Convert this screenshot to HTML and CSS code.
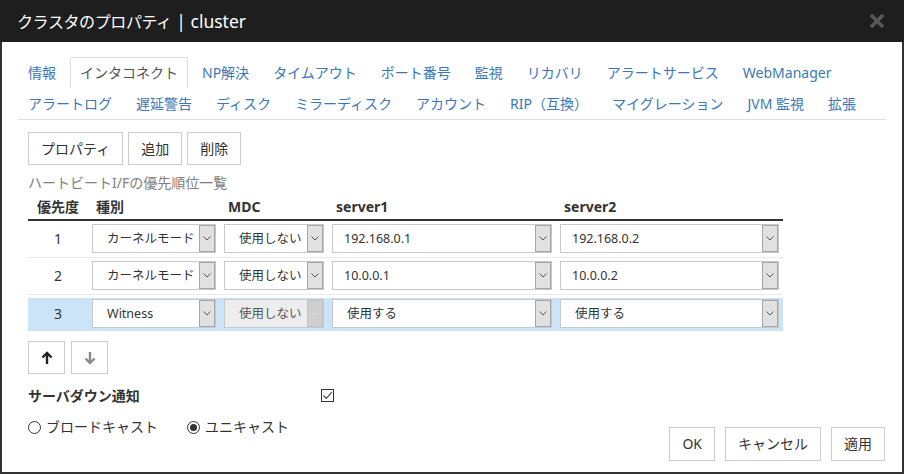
FILE: index.html
```html
<!DOCTYPE html>
<html lang="ja">
<head>
<meta charset="utf-8">
<title>クラスタのプロパティ</title>
<link rel="stylesheet" href="styles.css">
</head>
<body>
<div class="dialog">
  <div class="titlebar">
    <span class="title">クラスタのプロパティ<span class="title-latin"> | cluster</span></span>
    <svg class="close" width="16" height="16" viewBox="0 0 16 16"><path d="M2 2 L14 14 M14 2 L2 14" stroke="#5a5a5a" stroke-width="3.2" fill="none"/></svg>
  </div>
  <div class="body">
    <div class="tabs">
      <div class="tabrow">
        <a class="tab">情報</a>
        <a class="tab active">インタコネクト</a>
        <a class="tab">NP解決</a>
        <a class="tab">タイムアウト</a>
        <a class="tab">ポート番号</a>
        <a class="tab">監視</a>
        <a class="tab">リカバリ</a>
        <a class="tab">アラートサービス</a>
        <a class="tab">WebManager</a>
      </div>
      <div class="tabrow">
        <a class="tab">アラートログ</a>
        <a class="tab">遅延警告</a>
        <a class="tab">ディスク</a>
        <a class="tab">ミラーディスク</a>
        <a class="tab">アカウント</a>
        <a class="tab">RIP（互換）</a>
        <a class="tab">マイグレーション</a>
        <a class="tab">JVM 監視</a>
        <a class="tab">拡張</a>
      </div>
    </div>
    <div class="panel">
      <div class="btnrow">
        <button class="btn">プロパティ</button>
        <button class="btn">追加</button>
        <button class="btn">削除</button>
      </div>
      <div class="caption">ハートビートI/Fの優先順位一覧</div>
      <div class="grid">
        <div class="thead">
          <div class="c1 th center">優先度</div>
          <div class="c2 th">種別</div>
          <div class="c3 th">MDC</div>
          <div class="c4 th">server1</div>
          <div class="c5 th">server2</div>
        </div>
        <div class="tr">
          <div class="c1 num">1</div>
          <div class="c2"><div class="sel"><span class="val">カーネルモード</span><span class="arr"><svg width="8" height="5" viewBox="0 0 8 5"><path d="M0.5 0.5 L4 4 L7.5 0.5" stroke="#555" fill="none"/></svg></span></div></div>
          <div class="c3"><div class="sel"><span class="val">使用しない</span><span class="arr"><svg width="8" height="5" viewBox="0 0 8 5"><path d="M0.5 0.5 L4 4 L7.5 0.5" stroke="#555" fill="none"/></svg></span></div></div>
          <div class="c4"><div class="sel"><span class="val ip">192.168.0.1</span><span class="arr"><svg width="8" height="5" viewBox="0 0 8 5"><path d="M0.5 0.5 L4 4 L7.5 0.5" stroke="#555" fill="none"/></svg></span></div></div>
          <div class="c5"><div class="sel"><span class="val ip">192.168.0.2</span><span class="arr"><svg width="8" height="5" viewBox="0 0 8 5"><path d="M0.5 0.5 L4 4 L7.5 0.5" stroke="#555" fill="none"/></svg></span></div></div>
        </div>
        <div class="tr">
          <div class="c1 num">2</div>
          <div class="c2"><div class="sel"><span class="val">カーネルモード</span><span class="arr"><svg width="8" height="5" viewBox="0 0 8 5"><path d="M0.5 0.5 L4 4 L7.5 0.5" stroke="#555" fill="none"/></svg></span></div></div>
          <div class="c3"><div class="sel"><span class="val">使用しない</span><span class="arr"><svg width="8" height="5" viewBox="0 0 8 5"><path d="M0.5 0.5 L4 4 L7.5 0.5" stroke="#555" fill="none"/></svg></span></div></div>
          <div class="c4"><div class="sel"><span class="val ip">10.0.0.1</span><span class="arr"><svg width="8" height="5" viewBox="0 0 8 5"><path d="M0.5 0.5 L4 4 L7.5 0.5" stroke="#555" fill="none"/></svg></span></div></div>
          <div class="c5"><div class="sel"><span class="val ip">10.0.0.2</span><span class="arr"><svg width="8" height="5" viewBox="0 0 8 5"><path d="M0.5 0.5 L4 4 L7.5 0.5" stroke="#555" fill="none"/></svg></span></div></div>
        </div>
        <div class="tr selected">
          <div class="c1 num">3</div>
          <div class="c2"><div class="sel"><span class="val">Witness</span><span class="arr"><svg width="8" height="5" viewBox="0 0 8 5"><path d="M0.5 0.5 L4 4 L7.5 0.5" stroke="#555" fill="none"/></svg></span></div></div>
          <div class="c3"><div class="sel disabled"><span class="val">使用しない</span><span class="arr"><svg width="8" height="5" viewBox="0 0 8 5"><path d="M0.5 0.5 L4 4 L7.5 0.5" stroke="#e0e0e0" fill="none"/></svg></span></div></div>
          <div class="c4"><div class="sel"><span class="val">使用する</span><span class="arr"><svg width="8" height="5" viewBox="0 0 8 5"><path d="M0.5 0.5 L4 4 L7.5 0.5" stroke="#555" fill="none"/></svg></span></div></div>
          <div class="c5"><div class="sel"><span class="val">使用する</span><span class="arr"><svg width="8" height="5" viewBox="0 0 8 5"><path d="M0.5 0.5 L4 4 L7.5 0.5" stroke="#555" fill="none"/></svg></span></div></div>
        </div>
      </div>
      <div class="moverow">
        <button class="btn mv"><svg width="12" height="14" viewBox="0 0 12 14"><path d="M6 13 V2.5 M1.5 6.5 L6 2 L10.5 6.5" stroke="#222" stroke-width="2.4" fill="none"/></svg></button>
        <button class="btn mv"><svg width="12" height="14" viewBox="0 0 12 14"><path d="M6 1 V11.5 M1.5 7.5 L6 12 L10.5 7.5" stroke="#8a8a8a" stroke-width="2.4" fill="none"/></svg></button>
      </div>
      <div class="notify">
        <span class="notify-label">サーバダウン通知</span>
        <span class="check"><svg width="11" height="11" viewBox="0 0 11 11"><path d="M1.5 5.5 L4.3 8.3 L9.8 2.2" stroke="#444" stroke-width="1.2" fill="none"/></svg></span>
      </div>
      <div class="foot">
        <div class="radios">
          <label class="radio"><span class="rb"></span>ブロードキャスト</label>
          <label class="radio"><span class="rb on"></span>ユニキャスト</label>
        </div>
        <div class="actions">
          <button class="btn">OK</button>
          <button class="btn">キャンセル</button>
          <button class="btn">適用</button>
        </div>
      </div>
    </div>
  </div>
</div>
</body>
</html>
```
FILE: styles.css
```css
html, body {
  margin: 0;
  padding: 0;
  background: #fff;
  overflow: hidden;
}
body {
  font-family: "Noto Sans", "Noto Sans CJK JP", sans-serif;
  font-size: 14px;
  color: #333;
}
.dialog {
  width: 904px;
  height: 474px;
  box-sizing: border-box;
  border: 2px solid #333;
  border-top: none;
  background: #fff;
  display: flex;
  flex-direction: column;
}
.titlebar {
  height: 42px;
  margin: 0 -2px;
  background: #1e1e1e;
  display: flex;
  align-items: center;
  justify-content: space-between;
  padding: 0 19px 0 17px;
  flex-shrink: 0;
}
.title {
  color: #fff;
  font-family: "Noto Sans CJK JP", sans-serif;
  font-size: 16px;
  letter-spacing: -0.4px;
  line-height: 20px;
  white-space: pre;
}
.title-latin {
  font-family: "Noto Sans", sans-serif;
  font-size: 17.5px;
  letter-spacing: 0;
}
.close {
  display: block;
}
.body {
  padding: 15px 16px 0 16px;
}
.tabs {
  border-bottom: 1px solid #ddd;
}
.tabrow {
  display: flex;
  height: 31px;
}
.tab {
  display: block;
  padding: 0 9px;
  margin-right: 4px;
  line-height: 29px;
  border: 1px solid transparent;
  border-bottom: none;
  color: #3a78b8;
  white-space: nowrap;
  cursor: pointer;
}
.tab.active {
  border-color: #ddd;
  color: #555;
  border-radius: 2px 2px 0 0;
}
.panel {
  padding: 12px 9px 0 10px;
}
.btnrow {
  display: flex;
  gap: 5px;
}
.btn {
  font-family: "Noto Sans", "Noto Sans CJK JP", sans-serif;
  font-size: 14px;
  color: #333;
  background: #fff;
  border: 1px solid #ccc;
  height: 33px;
  padding: 0 12px;
  margin: 0;
  line-height: 20px;
  cursor: pointer;
}
.caption {
  margin-top: 8px;
  line-height: 20px;
  color: #808080;
}
.grid {
  width: 755px;
  margin-top: 4px;
}
.thead {
  display: flex;
  border-bottom: 2px solid #333;
  height: 22px;
}
.th {
  font-weight: bold;
  line-height: 20px;
  padding-left: 8px;
  box-sizing: border-box;
}
.th.center {
  padding-left: 0;
  text-align: center;
}
.c1 { width: 60px; flex-shrink: 0; }
.c2 { width: 132px; flex-shrink: 0; }
.c3 { width: 108px; flex-shrink: 0; }
.c4 { width: 228px; flex-shrink: 0; }
.c5 { width: 227px; flex-shrink: 0; }
.tr {
  display: flex;
  align-items: center;
  padding: 3px 0 4px;
  border-bottom: 1px solid #eaeaea;
}
.tr > div:not(.c1) {
  box-sizing: border-box;
  padding: 0 4px;
}
.tr.selected {
  margin-top: 3px;
  padding: 1px 0 3px;
  border-bottom: none;
  background: #cce4f7;
}
.num {
  text-align: center;
  font-size: 14px;
}
.sel {
  display: flex;
  height: 29px;
  box-sizing: border-box;
  border: 1px solid #c8c8c8;
  background: #fff;
  font-size: 12.5px;
  color: #333;
}
.val {
  flex: 1;
  padding-left: 14px;
  line-height: 27px;
  white-space: nowrap;
  overflow: hidden;
}
.val.ip { padding-left: 11px; }
.arr {
  width: 16px;
  flex-shrink: 0;
  box-sizing: border-box;
  border: 1px solid #a6a6a6;
  margin: 0;
  background: #e1e1e1;
  display: flex;
  align-items: center;
  justify-content: center;
}
.sel.disabled {
  background: #ededed;
  color: #555;
}
.sel.disabled .arr {
  background: #cfcfcf;
  border-color: #c4c4c4;
}
.moverow {
  display: flex;
  gap: 6px;
  margin-top: 10px;
}
.btn.mv {
  width: 37px;
  padding: 0;
  display: flex;
  align-items: center;
  justify-content: center;
}
.btn.mv svg { display: block; }
.notify {
  display: flex;
  align-items: center;
  margin-top: 11px;
  height: 20px;
}
.notify-label {
  font-weight: bold;
  width: 293px;
}
.check {
  width: 13px;
  height: 13px;
  box-sizing: border-box;
  border: 1px solid #333;
  display: flex;
  align-items: center;
  justify-content: center;
}
.check svg { display: block; }
.foot {
  display: flex;
  justify-content: space-between;
  align-items: flex-start;
  margin-top: 12px;
  margin-right: -8px;
}
.radios {
  display: flex;
  gap: 29px;
  line-height: 20px;
}
.radio {
  display: flex;
  align-items: center;
  gap: 5px;
}
.rb {
  width: 13px;
  height: 13px;
  box-sizing: border-box;
  border: 1px solid #333;
  border-radius: 50%;
  display: flex;
  align-items: center;
  justify-content: center;
}
.rb.on::after {
  content: "";
  width: 7px;
  height: 7px;
  border-radius: 50%;
  background: #333;
}
.actions {
  display: flex;
  gap: 10px;
  margin-top: 10px;
}
.actions .btn {
  height: 34px;
}
```
